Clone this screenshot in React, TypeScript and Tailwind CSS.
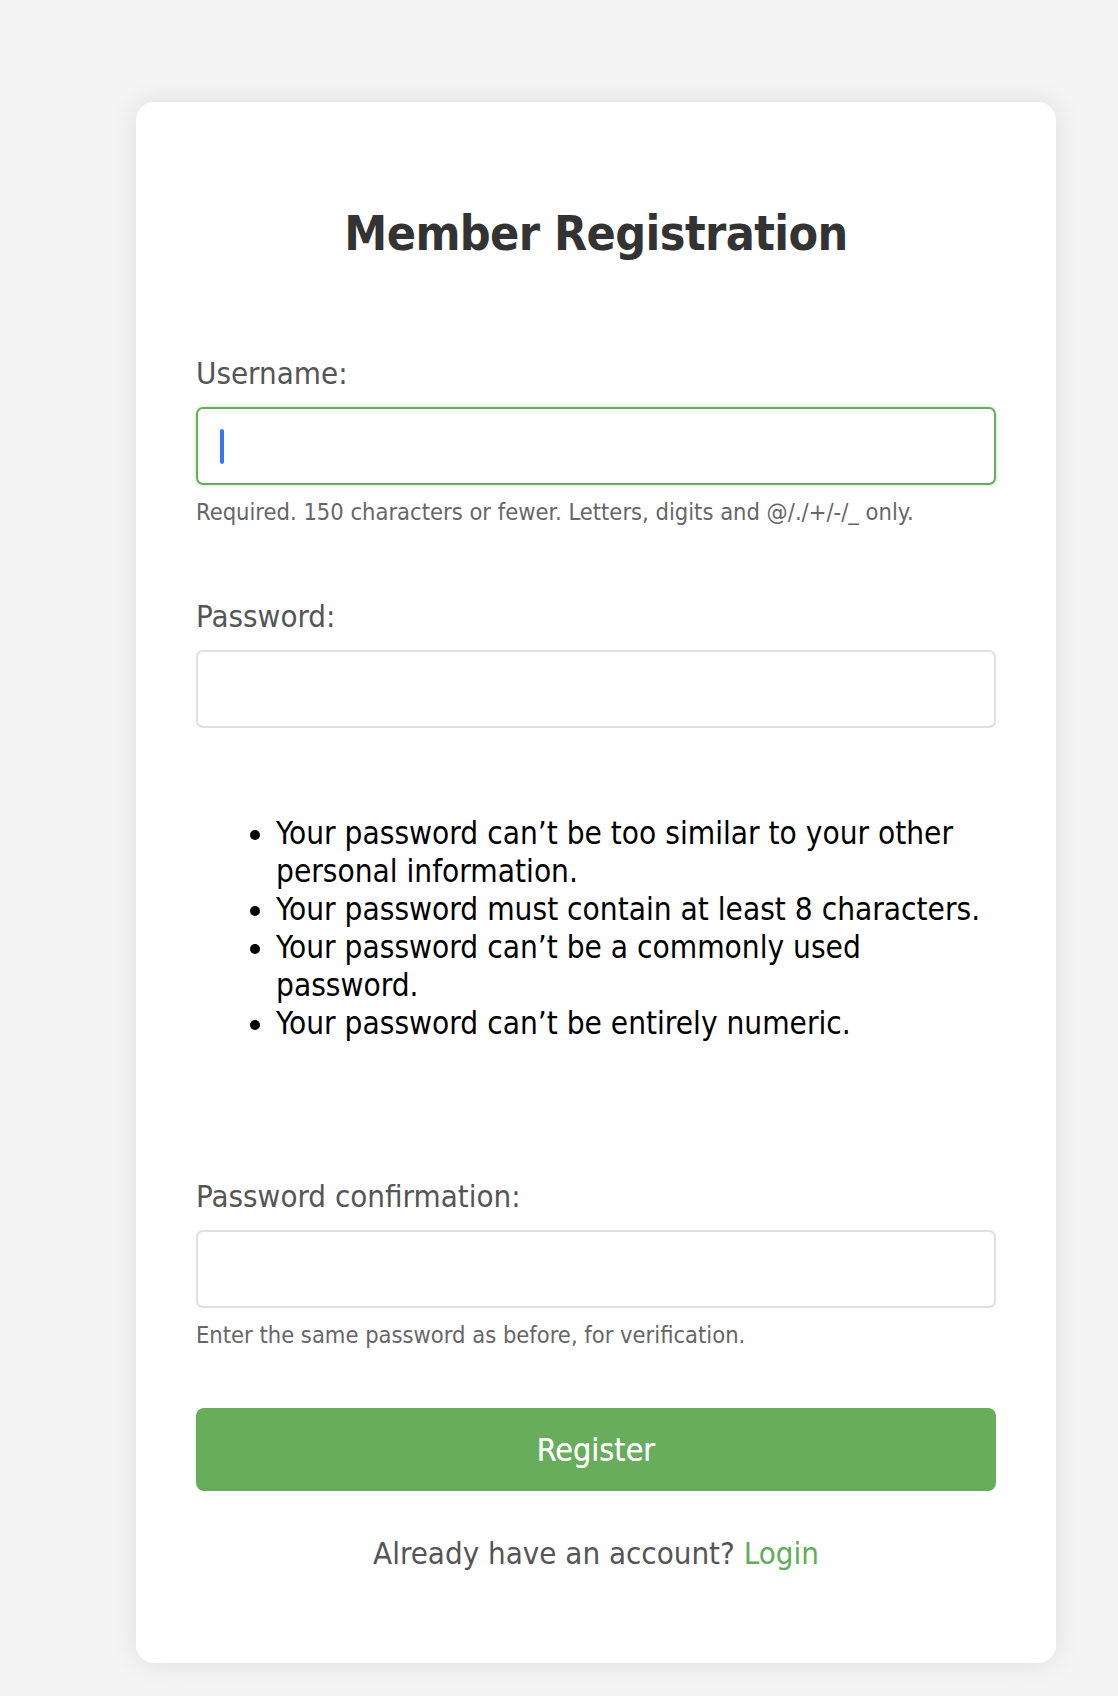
import React from 'react';

const font = { fontFamily: '"DejaVu Sans Condensed", "DejaVu Sans", Verdana, sans-serif' };

const rules = [
  'Your password can’t be too similar to your other personal information.',
  'Your password must contain at least 8 characters.',
  'Your password can’t be a commonly used password.',
  'Your password can’t be entirely numeric.',
];

function Label({ children, className = '' }: { children: React.ReactNode; className?: string }) {
  return <label className={`block text-[31px] leading-[38px] text-[#555] ${className}`}>{children}</label>;
}

function Help({ children }: { children: React.ReactNode }) {
  return <p className="mt-[14px] text-[23.5px] leading-[27px] text-[#666]">{children}</p>;
}

export default function App() {
  return (
    <div className="min-h-screen bg-[#f4f4f4] pt-[102px] pl-[136px] pb-[34px]" style={font}>
      <div className="w-[920px] rounded-[18px] bg-white px-[60px] pt-[101px] pb-[92px] shadow-[0_0_28px_rgba(0,0,0,0.09)]">
        <h1 className="text-center text-[48px] leading-[60px] font-bold tracking-[-0.6px] text-[#333]">Member Registration</h1>

        <form className="mt-[91px]">
          {/* Username */}
          <Label>Username:</Label>
          <div className="mt-[15px] flex h-[78px] items-center rounded-[7px] border-2 border-[#67ad5c] px-[22px] shadow-[0_0_4px_rgba(103,173,92,0.35)]">
            <span className="h-[35px] w-[4px] rounded-full bg-[#3478f6]" />
          </div>
          <Help>Required. 150 characters or fewer. Letters, digits and @/./+/-/_ only.</Help>

          {/* Password */}
          <Label className="mt-[71px]">Password:</Label>
          <input type="password" className="mt-[15px] block h-[78px] w-full rounded-[7px] border-2 border-[#e0e0e0] px-[22px] outline-none" />

          <ul className="mt-[86px] list-disc pl-[80px] text-[31.3px] leading-[38px] text-black">
            {rules.map((r) => (
              <li key={r}>{r}</li>
            ))}
          </ul>

          {/* Confirmation */}
          <Label className="mt-[135px]">Password confirmation:</Label>
          <input type="password" className="mt-[15px] block h-[78px] w-full rounded-[7px] border-2 border-[#e0e0e0] px-[22px] outline-none" />
          <Help>Enter the same password as before, for verification.</Help>

          <button type="button" className="mt-[59px] flex h-[83px] w-full items-center justify-center rounded-[8px] bg-[#67ad5c] text-[32px] text-white [text-shadow:0_0_0.6px_#fff]">
            Register
          </button>
        </form>

        <p className="mt-[44px] text-center text-[31px] leading-[36px] text-[#555]">
          Already have an account? <a className="text-[#5fae57]">Login</a>
        </p>
      </div>
    </div>
  );
}
